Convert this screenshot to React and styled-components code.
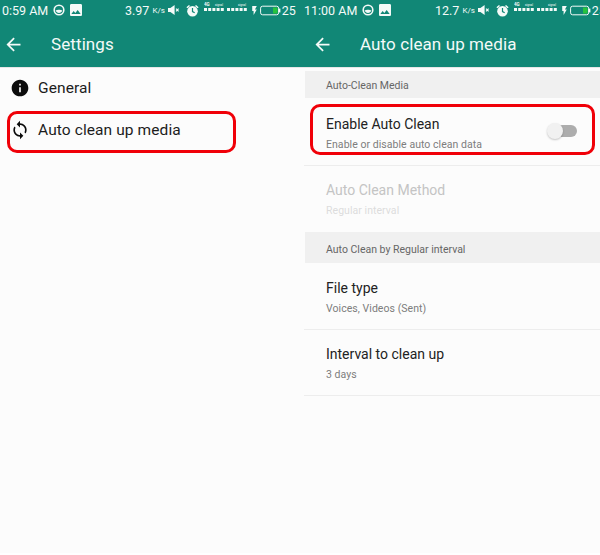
import React from "react";
import styled, { createGlobalStyle } from "styled-components";
import { MdInfo, MdSync, MdArrowBack, MdImage, MdFlashOn } from "react-icons/md";

const GlobalStyle = createGlobalStyle`
  html, body { margin: 0; padding: 0; background: #fff; }
  body { font-family: Roboto, "Liberation Sans", sans-serif; }
`;

const Page = styled.div`
  width: 600px;
  height: 555px;
  display: grid;
  grid-template-columns: 300px 300px;
  overflow: hidden;
`;

const Phone = styled.div`
  position: relative;
  height: 553px;
  background: #fcfcfc;
  overflow: hidden;
`;

const Header = styled.header`
  height: 67px;
  background: #118776;
  color: #f4faf8;
  border-bottom: 1px solid #e6e6e6;
`;

const StatusBar = styled.div`
  height: 20px;
  margin-bottom: 4px;
  display: flex;
  align-items: center;
  padding-left: ${(p) => p.$left}px;
  white-space: nowrap;
  font-size: 12.5px;
`;

const Time = styled.span`
  width: ${(p) => p.$width}px;
  flex: none;
`;

const Speed = styled.span`
  margin-left: ${(p) => p.$gap}px;
  flex: none;
`;

const Unit = styled.span`
  margin: 0 3px 0 3px;
  font-size: 8px;
  flex: none;
`;

const Status = styled.span`
  display: flex;
  flex: none;
  margin-right: ${(p) => p.$after ?? 0}px;
`;

const Signal = styled.svg`
  flex: none;
  margin: -4px 1px 0 0;
`;

const Level = styled.span`
  margin-left: 1px;
  flex: none;
`;

const TitleRow = styled.div`
  height: 40px;
  display: flex;
  align-items: center;
  padding-left: ${(p) => p.$left}px;
  font-size: 17px;
  letter-spacing: 0.1px;
`;

const Back = styled.span`
  display: flex;
  margin-right: 27px;
`;

const MenuRow = styled.div`
  height: 42px;
  padding-bottom: 2px;
  box-sizing: border-box;
  display: flex;
  align-items: center;
  padding-left: 10px;
  gap: 8px;
  color: #1c1c1c;
  font-size: 15.5px;
  letter-spacing: 0.1px;
`;

const MenuIcon = styled.span`
  display: flex;
  width: 20px;
  justify-content: center;
  color: #0c0c0c;
`;

const Section = styled.div`
  margin: ${(p) => p.$top}px 0 0 5px;
  height: ${(p) => p.$height}px;
  padding: ${(p) => p.$nudge}px 0 0 21px;
  box-sizing: border-box;
  display: flex;
  align-items: center;
  background: #f0f0f0;
  color: #666;
  font-size: 10.5px;
`;

const Setting = styled.div`
  height: ${(p) => p.$height}px;
  margin-left: 4px;
  padding: ${(p) => p.$top}px 0 0 22px;
  box-sizing: border-box;
  position: relative;
  border-bottom: ${(p) => (p.$line ? "1px solid #ededed" : "none")};
`;

const Title = styled.div`
  font-size: 14px;
  line-height: 20px;
  color: ${(p) => (p.$muted ? "#c4c4c4" : "#222")};
`;

const Sub = styled.div`
  font-size: 10.5px;
  line-height: 14px;
  margin-top: 4px;
  letter-spacing: 0.05px;
  color: ${(p) => (p.$muted ? "#dcdcdc" : "#7d7d7d")};
`;

const Switch = styled.div`
  position: absolute;
  right: 23px;
  top: 27px;
  width: 29px;
  height: 12px;
  border-radius: 6px;
  background: #adadad;
`;

const Knob = styled.div`
  position: absolute;
  left: -1px;
  top: -2px;
  width: 16px;
  height: 16px;
  border-radius: 50%;
  background: #f1f1f1;
  box-shadow: 0 1px 2px rgba(0, 0, 0, 0.22);
`;

const Highlight = styled.div`
  position: absolute;
  left: ${(p) => p.$x}px;
  top: ${(p) => p.$y}px;
  width: ${(p) => p.$w}px;
  height: ${(p) => p.$h}px;
  box-sizing: border-box;
  border: 3px solid #f00008;
  border-radius: 10px;
`;

const DOTS = [0, 4.2, 8.4, 12.6, 16.8, 23, 27.2, 31.4, 35.6, 39.8];

const Bar = ({ left, time, timeWidth, gap, speed }) => (
  <StatusBar $left={left}>
    <Time $width={timeWidth}>{time}</Time>
    <Status $after={3}>
      <svg width="12" height="12" viewBox="0 0 12 12" fill="none">
        <circle cx="6" cy="6" r="4.8" stroke="#f4faf8" strokeWidth="1.6" />
        <path d="M2.6 6.6c1.5-1.3 5.3-1.3 6.8 0-.6 1.5-1.9 2.4-3.4 2.4s-2.8-.9-3.4-2.4z" fill="#f4faf8" />
      </svg>
    </Status>
    <Status>
      <MdImage size={16} />
    </Status>
    <Speed $gap={gap}>{speed}</Speed>
    <Unit>K/s</Unit>
    <Status $after={6}>
      <svg width="12" height="12" viewBox="0 0 12 12" fill="#f4faf8">
        <path d="M0 4h2.4L6.6 1v10L2.4 8H0z" />
        <path d="M8 4.6l2.6 2.8M10.6 4.6L8 7.4" stroke="#f4faf8" strokeWidth="1.1" fill="none" />
      </svg>
    </Status>
    <Status $after={5}>
      <svg width="13" height="13" viewBox="0 0 13 13">
        <circle cx="6.5" cy="7.3" r="5.3" fill="#f4faf8" />
        <path d="M6.5 4v3.6l2.2 1.2" stroke="#118776" strokeWidth="1.2" fill="none" />
        <path d="M0.4 3.2L3 0.9 4 2 1.4 4.3zM12.6 3.2L10 0.9 9 2l2.6 2.3z" fill="#f4faf8" />
      </svg>
    </Status>
    <Signal width="44" height="12" viewBox="0 0 44 12" fill="#f4faf8">
      <text x="0" y="4" fontSize="4.5" fontWeight="700">4G</text>
      <text x="11" y="3.5" fontSize="3">signal</text>
      <text x="34" y="3.5" fontSize="3">signal</text>
      {DOTS.map((x) => (
        <rect key={x} x={x} y="6" width="3" height="3" />
      ))}
    </Signal>
    <Status>
      <MdFlashOn size={11} />
    </Status>
    <svg width="21" height="11" viewBox="0 0 21 11" style={{ flex: "none" }}>
      <rect x="0.6" y="1.2" width="18" height="8.6" rx="2" fill="none" stroke="#f4faf8" strokeWidth="1" />
      <rect x="13" y="2.5" width="4.5" height="6" fill="#27c33d" />
      <rect x="19" y="3.6" width="1.4" height="3.8" fill="#f4faf8" />
    </svg>
    <Level>25</Level>
  </StatusBar>
);

export default function App() {
  return (
    <>
      <GlobalStyle />
      <Page>
        <Phone>
          <Header>
            <Bar left={2} time="0:59 AM" timeWidth={51} gap={41} speed="3.97" />
            <TitleRow $left={3}>
              <Back>
                <MdArrowBack size={21} />
              </Back>
              Settings
            </TitleRow>
          </Header>
          <nav>
            <MenuRow>
              <MenuIcon>
                <MdInfo size={22} />
              </MenuIcon>
              General
            </MenuRow>
            <MenuRow>
              <MenuIcon>
                <MdSync size={22} />
              </MenuIcon>
              Auto clean up media
            </MenuRow>
          </nav>
          <Highlight $x={7} $y={111} $w={229} $h={42} />
        </Phone>
        <Phone>
          <Header>
            <Bar left={4} time="11:00 AM" timeWidth={58} gap={42} speed="12.7" />
            <TitleRow $left={12}>
              <Back>
                <MdArrowBack size={21} />
              </Back>
              Auto clean up media
            </TitleRow>
          </Header>
          <Section $top={3} $height={27} $nudge={2}>Auto-Clean Media</Section>
          <Setting $line $height={68} $top={16}>
            <Title>Enable Auto Clean</Title>
            <Sub>Enable or disable auto clean data</Sub>
            <Switch>
              <Knob />
            </Switch>
          </Setting>
          <Setting $height={66} $top={14}>
            <Title $muted>Auto Clean Method</Title>
            <Sub $muted>Regular interval</Sub>
          </Setting>
          <Section $top={0} $height={31} $nudge={4}>Auto Clean by Regular interval</Section>
          <Setting $line $height={67} $top={15}>
            <Title>File type</Title>
            <Sub>Voices, Videos (Sent)</Sub>
          </Setting>
          <Setting $line $height={66} $top={14}>
            <Title>Interval to clean up</Title>
            <Sub>3 days</Sub>
          </Setting>
          <Highlight $x={10} $y={104} $w={285} $h={51} />
        </Phone>
      </Page>
    </>
  );
}
